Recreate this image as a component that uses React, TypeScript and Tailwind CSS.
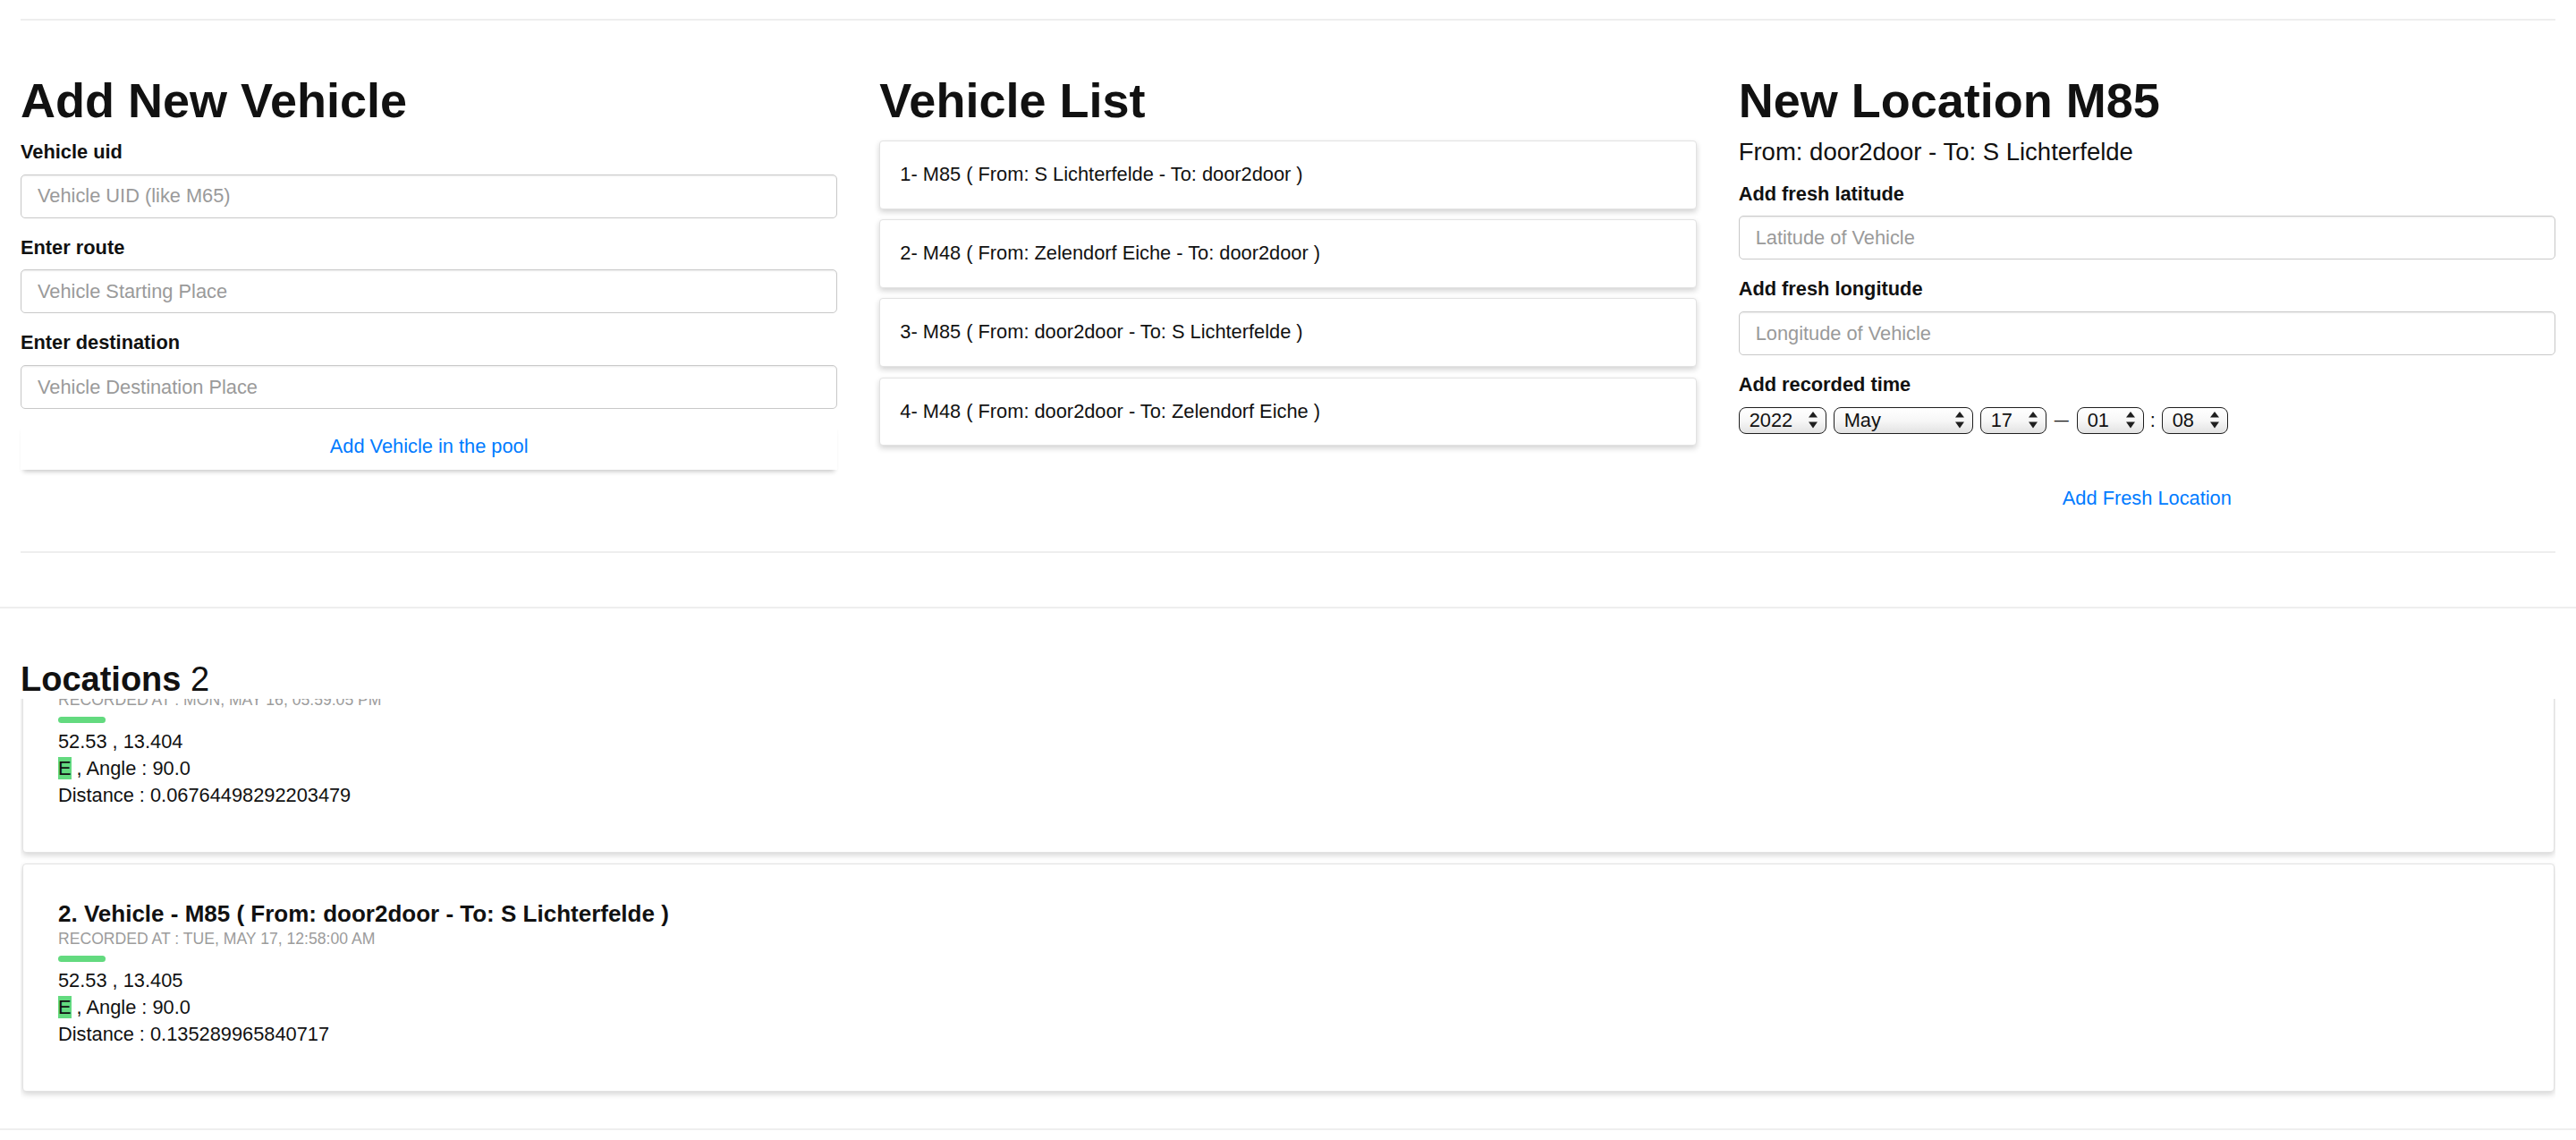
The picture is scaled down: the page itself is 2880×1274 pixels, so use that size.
import React, { useLayoutEffect, useRef } from 'react';

const vehicles = [
  '1- M85 ( From: S Lichterfelde - To: door2door )',
  '2- M48 ( From: Zelendorf Eiche - To: door2door )',
  '3- M85 ( From: door2door - To: S Lichterfelde )',
  '4- M48 ( From: door2door - To: Zelendorf Eiche )',
];

const locations = [
  {
    title: '1. Vehicle - M85 ( From: door2door - To: S Lichterfelde )',
    recorded: 'RECORDED AT : MON, MAY 16, 05:59:05 PM',
    coords: '52.53 , 13.404',
    distance: '0.06764498292203479',
  },
  {
    title: '2. Vehicle - M85 ( From: door2door - To: S Lichterfelde )',
    recorded: 'RECORDED AT : TUE, MAY 17, 12:58:00 AM',
    coords: '52.53 , 13.405',
    distance: '0.135289965840717',
  },
];

function Field({ label, placeholder }: { label: string; placeholder: string }) {
  return (
    <div className="mb-[17px]">
      <label className="mb-[8px] block font-bold leading-[32.7px]">{label}</label>
      <input
        placeholder={placeholder}
        className="block h-[49px] w-full rounded-[5px] border-[1.5px] border-[#c9c9c9] bg-white px-[18px] text-[21.8px] shadow-[inset_0_1px_2px_rgba(0,0,0,0.08)] outline-none placeholder:text-[#9a9a9a]"
      />
    </div>
  );
}

// up / down arrows like the native select control
function SelectArrows() {
  return (
    <svg width={10} height={19} viewBox="0 0 10 19" className="shrink-0">
      <path d="M0 6.5 L5 0 L10 6.5 Z" fill="#1f1f1f" />
      <path d="M0 11.5 L10 11.5 L5 18.5 Z" fill="#1f1f1f" />
    </svg>
  );
}

function DateSelect({ value, width }: { value: string; width: string }) {
  return (
    <div
      className={`flex h-[30px] ${width} items-center justify-between rounded-[8px] border-[1.5px] border-[#1f1f1f] bg-linear-to-b from-white via-[#f7f7f7] to-[#e2e2e2] pl-[11px] pr-[9px] leading-none`}
    >
      <span>{value}</span>
      <SelectArrows />
    </div>
  );
}

function LocationCard({ item, first }: { item: (typeof locations)[number]; first?: boolean }) {
  return (
    <div
      className={`${first ? '' : 'mt-[12px]'} rounded-[4px] border border-[#e2e2e2] bg-white px-[39.5px] pt-[40px] pb-[48px] shadow-[0_3px_6px_rgba(0,0,0,0.16)]`}
    >
      <div className="text-[26px] font-bold leading-[30px]">{item.title}</div>
      <div className="mt-[2px] text-[17.6px] leading-[22px] text-[#9c9c9c]">{item.recorded}</div>
      <div className="mt-[8px] h-[7px] w-[53px] rounded-full bg-[#63da7f]" />
      <div className="mt-[6px] leading-[30px]">
        <div>{item.coords}</div>
        <div>
          <span className="bg-[#63da7f]">E</span> , Angle : 90.0
        </div>
        <div>Distance : {item.distance}</div>
      </div>
    </div>
  );
}

export default function App() {
  const listRef = useRef<HTMLDivElement>(null);

  useLayoutEffect(() => {
    if (listRef.current) listRef.current.scrollTop = 83;
  }, []);

  return (
    <div className="min-h-screen bg-white font-['Liberation_Sans',Arial,sans-serif] text-[21.8px] text-[#111]">
      <div className="px-[23px] pt-[21px]">
        <div className="h-[2px] bg-[#eeeeee]" />

        <div className="grid grid-cols-3 items-start gap-x-[47px] pt-[57px]">
          {/* Add New Vehicle */}
          <div>
            <h1 className="mb-[9px] text-[54px] font-bold leading-[65px]">Add New Vehicle</h1>
            <Field label="Vehicle uid" placeholder="Vehicle UID (like M65)" />
            <Field label="Enter route" placeholder="Vehicle Starting Place" />
            <Field label="Enter destination" placeholder="Vehicle Destination Place" />
            <button className="mt-[9px] block w-full bg-white py-[9px] text-center leading-[32.7px] text-[#007bff] shadow-[0_5px_5px_-3px_rgba(0,0,0,0.22)]">
              Add Vehicle in the pool
            </button>
          </div>

          {/* Vehicle List */}
          <div>
            <h1 className="mb-[12px] text-[54px] font-bold leading-[65px]">Vehicle List</h1>
            <div className="flex flex-col gap-[11.5px]">
              {vehicles.map((v) => (
                <div
                  key={v}
                  className="rounded-[4px] border border-[#e2e2e2] bg-white px-[22px] py-[21px] leading-[32.7px] shadow-[0_3px_6px_rgba(0,0,0,0.18)]"
                >
                  {v}
                </div>
              ))}
            </div>
          </div>

          {/* New Location */}
          <div>
            <h1 className="mb-[9px] text-[54px] font-bold leading-[65px]">New Location M85</h1>
            <div className="mb-[14px] text-[27.5px] leading-[32.7px]">From: door2door - To: S Lichterfelde</div>
            <Field label="Add fresh latitude" placeholder="Latitude of Vehicle" />
            <Field label="Add fresh longitude" placeholder="Longitude of Vehicle" />
            <label className="mb-[8px] block font-bold leading-[32.7px]">Add recorded time</label>
            <div className="flex items-center">
              <DateSelect value="2022" width="w-[98px]" />
              <div className="ml-[8px]">
                <DateSelect value="May" width="w-[156px]" />
              </div>
              <div className="ml-[8px]">
                <DateSelect value="17" width="w-[74px]" />
              </div>
              <span className="mx-[9px] text-[16px] leading-none">—</span>
              <DateSelect value="01" width="w-[75px]" />
              <span className="mx-[7px] leading-none">:</span>
              <DateSelect value="08" width="w-[74px]" />
            </div>
            <button className="mt-[48px] block w-full py-[8px] text-center leading-[32.7px] text-[#007bff]">
              Add Fresh Location
            </button>
          </div>
        </div>

        <div className="mt-[34px] h-[2px] bg-[#eeeeee]" />
      </div>

      <div className="mt-[60px] h-[2px] bg-[#eeeeee]" />

      {/* Locations */}
      <div className="px-[23px] pt-[57px]">
        <h3 className="text-[38px] leading-[44px]">
          <span className="font-bold">Locations</span> 2
        </h3>
        <div
          ref={listRef}
          className="h-[450px] overflow-y-auto [scrollbar-width:none] [&::-webkit-scrollbar]:hidden"
        >
          <div className="px-[1.5px] pb-[12px]">
            {locations.map((l, i) => (
              <LocationCard key={l.title} item={l} first={i === 0} />
            ))}
          </div>
        </div>
      </div>

      <div className="mt-[30px] h-[2px] bg-[#eeeeee]" />
    </div>
  );
}
